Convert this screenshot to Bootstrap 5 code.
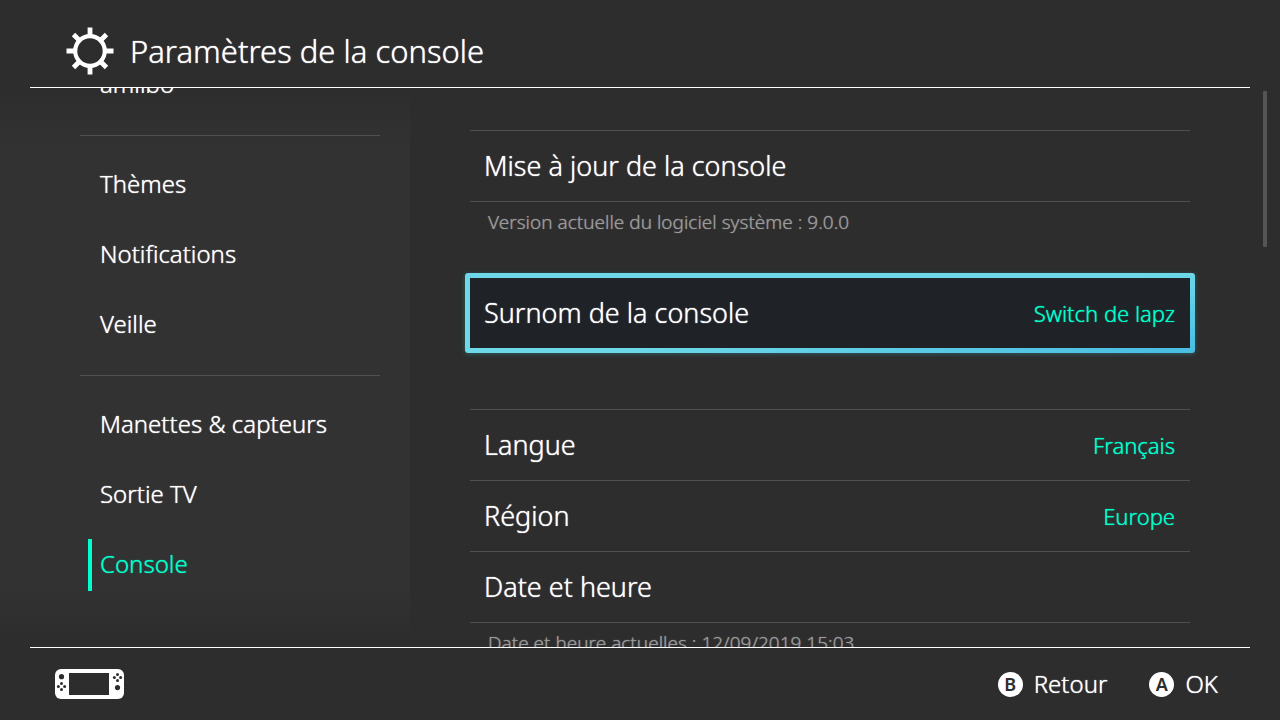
<!DOCTYPE html>
<html lang="fr">
<head>
<meta charset="utf-8">
<meta name="viewport" content="width=device-width, initial-scale=1">
<title>Paramètres de la console</title>
<link rel="stylesheet" href="https://cdn.jsdelivr.net/npm/bootstrap@5.3.0/dist/css/bootstrap.min.css">
<style>
  body {
    background: #2d2d2d;
    color: #fff;
    font-family: "Noto Sans", "Open Sans", sans-serif;
    font-weight: 300;
    text-shadow: 0 0 1px currentColor;
  }
  .rule-inset { margin: 0 30px; }
  .top-bar { height: 88px; padding: 14px 36px 0; border-bottom: 1px solid #fff; }
  .top-bar h1 { font-size: 31px; line-height: 40px; font-weight: 300; margin-left: 16px; }
  .bottom-bar { height: 73px; padding: 0 32px 0 25px; border-top: 1px solid #fff; }
  .middle { min-height: 0; }

  /* Category list, scrolled so that its first entry is partly hidden */
  .side-panel {
    width: 410px;
    padding: 0 30px 0 80px;
    background: linear-gradient(#2d2d2d, #323232 60px, #323232 500px, #2d2d2d 550px);
  }
  .side-list { margin-top: -38px; }
  .side-list .nav-link {
    height: 70px;
    padding: 0 20px;
    color: #fff;
    font-size: 24px;
    line-height: 68px;
  }
  .side-list .nav-link.active { color: #0fc; position: relative; }
  .side-list .nav-link.active::before {
    content: "";
    position: absolute;
    left: 8px;
    top: 9px;
    width: 4px;
    height: 52px;
    background: #0fc;
  }
  .side-rule { border-top: 1px solid #505050; margin: 15px 0 14px; }

  .content-panel { padding: 42px 73px 0 60px; }
  .content-panel .settings { min-width: 0; }
  .setting {
    height: 71px;
    padding: 0 15px 0 14px;
    background: none;
    border: 0;
    border-bottom: 1px solid #505050;
    color: #fff;
    font-size: 27px;
    font-weight: 300;
    text-shadow: inherit;
  }
  .setting span { text-shadow: 0 0 1px currentColor; }
  .setting-group { border-top: 1px solid #505050; }
  .setting-value { color: #0fc; font-size: 22px; }
  .setting-note { color: #999; font-size: 19px; line-height: 40px; padding-left: 18px; text-shadow: 0 0 1px currentColor; }
  .side-list .nav-link { text-shadow: 0 0 1px currentColor; }
  .setting.selected {
    height: 80px;
    width: calc(100% + 10px);
    margin: 31px -5px 56px;
    border: 5px solid transparent;
    border-radius: 3px;
    background: linear-gradient(#1f2328, #1f2328) padding-box,
                linear-gradient(172deg, #6cd8e8 55%, #48bde2) border-box;
    box-shadow: 0 1px 5px rgba(60, 200, 215, .3);
  }
  .scroll-thumb { width: 4px; height: 156px; margin: 3px 13px 0 0; border-radius: 1px; background: #555; }

  .key-hints { gap: 42px; }
  .key-hint { gap: 11px; background: none; border: 0; padding: 0; color: #fff; font-size: 24px; line-height: 36px; font-weight: 300; text-shadow: 0 0 1px currentColor; }
  .key-cap { width: 25px; height: 25px; background: #fff; color: #2d2d2d; font-size: 18px; line-height: 25px; font-weight: 600; text-shadow: none; }
</style>
</head>
<body class="vh-100 d-flex flex-column overflow-hidden">

<header class="rule-inset flex-shrink-0">
  <div class="top-bar d-flex align-items-center">
    <svg width="48" height="48" viewBox="-24 -24 48 48" fill="none" stroke="#fff" aria-hidden="true">
      <circle r="14.800" stroke-width="4.200"/>
      <g stroke-width="4.800">
        <path d="M0-23.500V-15M0 23.500V15M-23.500 0H-15M23.500 0H15"/>
        <path d="M-16.500-16.500L-11-11M16.500-16.500L11-11M-16.500 16.500L-11 11M16.500 16.500L11 11"/>
      </g>
    </svg>
    <h1 class="mb-0">Paramètres de la console</h1>
  </div>
</header>

<div class="middle d-flex flex-grow-1 overflow-hidden">
  <aside class="side-panel flex-shrink-0 overflow-hidden">
    <nav class="side-list nav flex-column flex-nowrap" aria-label="Catégories">
      <a class="nav-link" href="#">amiibo</a>
      <div class="side-rule"></div>
      <a class="nav-link" href="#">Thèmes</a>
      <a class="nav-link" href="#">Notifications</a>
      <a class="nav-link" href="#">Veille</a>
      <div class="side-rule"></div>
      <a class="nav-link" href="#">Manettes &amp; capteurs</a>
      <a class="nav-link" href="#">Sortie TV</a>
      <a class="nav-link active" href="#" aria-current="page">Console</a>
    </nav>
  </aside>

  <main class="content-panel flex-grow-1 overflow-hidden">
    <div class="settings">
      <div class="setting-group">
        <button type="button" class="setting w-100 d-flex align-items-center justify-content-between"><span>Mise à jour de la console</span></button>
      </div>
      <div class="setting-note">Version actuelle du logiciel système : 9.0.0</div>

      <button type="button" class="setting selected d-flex align-items-center justify-content-between"><span>Surnom de la console</span><span class="setting-value">Switch de lapz</span></button>

      <div class="setting-group">
        <button type="button" class="setting w-100 d-flex align-items-center justify-content-between"><span>Langue</span><span class="setting-value">Français</span></button>
        <button type="button" class="setting w-100 d-flex align-items-center justify-content-between"><span>Région</span><span class="setting-value">Europe</span></button>
        <button type="button" class="setting w-100 d-flex align-items-center justify-content-between"><span>Date et heure</span></button>
      </div>
      <div class="setting-note">Date et heure actuelles : 12/09/2019 15:03</div>
    </div>
  </main>
  <div class="scroll-thumb flex-shrink-0"></div>
</div>

<footer class="rule-inset flex-shrink-0">
  <div class="bottom-bar d-flex align-items-center">
    <svg width="69" height="30" viewBox="0 0 69 30" fill="#2d2d2d" aria-hidden="true">
      <rect width="69" height="30" rx="6" fill="#fff"/>
      <rect x="14" y="4" width="40" height="22"/>
      <circle cx="6.500" cy="7.700" r="2.600"/>
      <circle cx="62.500" cy="18.600" r="2.600"/>
      <g id="pad">
        <circle cx="6.500" cy="14.400" r="1.500"/><circle cx="6.500" cy="20.600" r="1.500"/>
        <circle cx="3.400" cy="17.500" r="1.500"/><circle cx="9.600" cy="17.500" r="1.500"/>
      </g>
      <use href="#pad" x="56" y="-9"/>
    </svg>
    <div class="key-hints d-flex ms-auto">
      <button type="button" class="key-hint d-flex align-items-center"><span class="key-cap rounded-circle text-center">B</span>Retour</button>
      <button type="button" class="key-hint d-flex align-items-center"><span class="key-cap rounded-circle text-center">A</span>OK</button>
    </div>
  </div>
</footer>

<script src="https://cdn.jsdelivr.net/npm/bootstrap@5.3.0/dist/js/bootstrap.bundle.min.js"></script>
</body>
</html>
